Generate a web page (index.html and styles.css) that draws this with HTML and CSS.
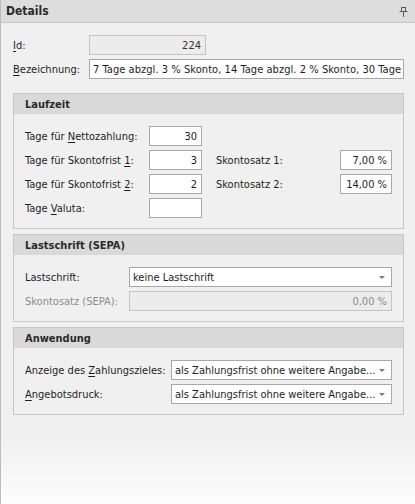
FILE: index.html
```html
<!DOCTYPE html>
<html lang="de">
<head>
<meta charset="utf-8">
<title>Details</title>
<link rel="stylesheet" href="styles.css">
</head>
<body>
<div class="panel">
  <div class="header">
    <span class="header-title">Details</span>
    <svg class="pin" width="9" height="10" viewBox="0 0 9 10">
      <path d="M2 0.5H7M2.5 0.5V4.5M6.5 0.5V4.5M0.5 4.5H8.5M4.5 4.5V10" fill="none" stroke="#5a5a5a" stroke-width="1"/>
    </svg>
  </div>
  <div class="content">
    <div class="top-grid">
      <label class="lbl"><u>I</u>d:</label>
      <div class="field field-disabled field-id num">224</div>
      <label class="lbl"><u>B</u>ezeichnung:</label>
      <div class="field field-wide">7 Tage abzgl. 3 % Skonto, 14 Tage abzgl. 2 % Skonto, 30 Tage</div>
    </div>

    <section class="group group-laufzeit">
      <div class="group-title">Laufzeit</div>
      <div class="group-body grid-laufzeit">
        <label class="lbl">Tage für <u>N</u>ettozahlung:</label>
        <div class="field num">30</div>
        <span></span><span></span><span></span>

        <label class="lbl">Tage für Skontofrist <u>1</u>:</label>
        <div class="field num">3</div>
        <span></span>
        <label class="lbl">Skontosatz 1:</label>
        <div class="field num">7,00 %</div>

        <label class="lbl">Tage für Skontofrist <u>2</u>:</label>
        <div class="field num">2</div>
        <span></span>
        <label class="lbl">Skontosatz 2:</label>
        <div class="field num">14,00 %</div>

        <label class="lbl">Tage <u>V</u>aluta:</label>
        <div class="field num"></div>
      </div>
    </section>

    <section class="group">
      <div class="group-title">Lastschrift (SEPA)</div>
      <div class="group-body grid-sepa">
        <label class="lbl">Lastschrift:</label>
        <div class="field select"><span class="select-text">keine Lastschrift</span><span class="arrow"></span></div>
        <label class="lbl lbl-disabled">Skontosatz (SEPA):</label>
        <div class="field field-disabled num text-disabled">0,00 %</div>
      </div>
    </section>

    <section class="group">
      <div class="group-title">Anwendung</div>
      <div class="group-body grid-anwendung">
        <label class="lbl">Anzeige des <u>Z</u>ahlungszieles:</label>
        <div class="field select"><span class="select-text">als Zahlungsfrist ohne weitere Angabe...</span><span class="arrow"></span></div>
        <label class="lbl"><u>A</u>ngebotsdruck:</label>
        <div class="field select"><span class="select-text">als Zahlungsfrist ohne weitere Angabe...</span><span class="arrow"></span></div>
      </div>
    </section>
  </div>
</div>
</body>
</html>
```

FILE: styles.css
```css
* {
  box-sizing: border-box;
}

html, body {
  margin: 0;
  padding: 0;
}

body {
  width: 415px;
  height: 504px;
  overflow: hidden;
  font-family: "DejaVu Sans", "Liberation Sans", sans-serif;
  font-stretch: condensed;
  font-size: 11px;
  color: #1e1e1e;
  background: #f0f0f0;
}

.panel {
  height: 504px;
  border-left: 1px solid #bcbcbc;
  background: linear-gradient(to bottom, #f0f0f0 0, #f0f0f0 438px, #fdfdfd 504px);
}

.header {
  height: 23px;
  background: #dddddd;
  border-bottom: 1px solid #c9c9c9;
  display: flex;
  align-items: center;
  justify-content: space-between;
  padding: 0 7px 1px 5px;
}

.header-title {
  font-weight: bold;
  font-size: 12px;
  color: #2a2a2a;
}

.pin {
  display: block;
  margin-top: 2px;
}

.content {
  padding: 12px 11px 0 12px;
}

.lbl {
  white-space: nowrap;
  align-self: center;
}

.lbl u {
  text-decoration-thickness: 1px;
  text-underline-offset: 2px;
}

.lbl-disabled {
  color: #8c8c8c;
}

.field {
  height: 20px;
  border: 1px solid #a8a8a8;
  background: #ffffff;
  padding: 0 4px 0 3px;
  display: flex;
  align-items: center;
  white-space: nowrap;
  overflow: hidden;
}

.num {
  justify-content: flex-end;
}

.field-disabled {
  background: #ececec;
  border-color: #c4c4c4;
}

.text-disabled {
  color: #8a8a8a;
}

.top-grid {
  display: grid;
  grid-template-columns: 76px 315px;
  row-gap: 4px;
}

.field-id {
  width: 117px;
  color: #333333;
}

.field-wide {
  padding-left: 3px;
  letter-spacing: 0.05px;
}

.group {
  width: 391px;
  border: 1px solid #c6c6c6;
  margin-top: 14px;
}

.group + .group {
  margin-top: 5px;
}

.group-title {
  height: 20px;
  background: #d9d9d9;
  font-weight: bold;
  color: #2a2a2a;
  display: flex;
  align-items: center;
  padding-left: 11px;
}

.group-body {
  padding: 12px 10px 10px 11px;
  display: grid;
  grid-auto-rows: 20px;
  row-gap: 4px;
}

.grid-laufzeit {
  grid-template-columns: 124px 53px 14px 124px 52px;
}

.grid-sepa {
  grid-template-columns: 104px 263px;
}

.grid-anwendung {
  grid-template-columns: 146px 221px;
}

.select {
  justify-content: space-between;
  padding-right: 6px;
}

.select-text {
  overflow: hidden;
}

.arrow {
  width: 0;
  height: 0;
  border-left: 3px solid transparent;
  border-right: 3px solid transparent;
  border-top: 3px solid #7a7a7a;
  flex: none;
  margin-top: 1px;
}
```
